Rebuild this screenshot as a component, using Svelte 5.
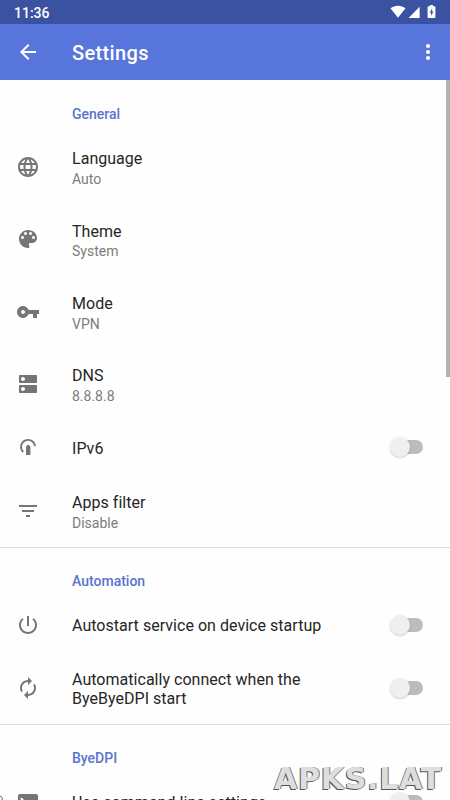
<script>
  const sections = [
    {
      title: 'General',
      rows: [
        { icon: 'globe', title: 'Language', summary: 'Auto' },
        { icon: 'palette', title: 'Theme', summary: 'System' },
        { icon: 'key', title: 'Mode', summary: 'VPN' },
        { icon: 'dns', title: 'DNS', summary: '8.8.8.8' },
        { icon: 'ipv6', title: 'IPv6', toggle: true },
        { icon: 'filter', title: 'Apps filter', summary: 'Disable' }
      ]
    },
    {
      title: 'Automation',
      rows: [
        { icon: 'power', title: 'Autostart service on device startup', toggle: true },
        { icon: 'sync', title: 'Automatically connect when the ByeByeDPI start', toggle: true, tall: true }
      ]
    },
    {
      title: 'ByeDPI',
      rows: [{ icon: 'terminal', title: 'Use command line settings', toggle: true }]
    }
  ];

  const icons = {
    globe: 'M11.99 2C6.47 2 2 6.48 2 12s4.47 10 9.99 10C17.52 22 22 17.52 22 12S17.52 2 11.99 2zm6.93 6h-2.95c-.32-1.25-.78-2.45-1.38-3.56 1.84.63 3.37 1.91 4.33 3.56zM12 4.04c.83 1.2 1.48 2.53 1.91 3.96h-3.82c.43-1.43 1.08-2.76 1.91-3.96zM4.26 14C4.1 13.36 4 12.69 4 12s.1-1.36.26-2h3.38c-.08.66-.14 1.32-.14 2s.06 1.34.14 2H4.26zm.82 2h2.95c.32 1.25.78 2.45 1.38 3.56-1.84-.63-3.37-1.9-4.33-3.56zm2.95-8H5.08c.96-1.66 2.49-2.93 4.33-3.56C8.81 5.55 8.35 6.75 8.03 8zM12 19.96c-.83-1.2-1.48-2.53-1.91-3.96h3.82c-.43 1.43-1.08 2.76-1.91 3.96zM14.34 14H9.66c-.09-.66-.16-1.32-.16-2s.07-1.35.16-2h4.68c.09.65.16 1.32.16 2s-.07 1.34-.16 2zm.25 5.56c.6-1.11 1.06-2.31 1.38-3.56h2.95c-.96 1.65-2.49 2.93-4.33 3.56zM16.36 14c.08-.66.14-1.32.14-2s-.06-1.34-.14-2h3.38c.16.64.26 1.31.26 2s-.1 1.36-.26 2h-3.38z',
    palette: 'M12 3c-4.97 0-9 4.03-9 9s4.03 9 9 9c.83 0 1.5-.67 1.5-1.5 0-.39-.15-.74-.39-1.01-.23-.26-.38-.61-.38-.99 0-.83.67-1.5 1.5-1.5H16c2.76 0 5-2.24 5-5 0-4.42-4.03-8-9-8zm-5.5 9c-.83 0-1.5-.67-1.5-1.5S5.67 9 6.5 9 8 9.67 8 10.5 7.33 12 6.5 12zm3-4C8.67 8 8 7.33 8 6.5S8.67 5 9.5 5s1.5.67 1.5 1.5S10.33 8 9.5 8zm5 0c-.83 0-1.5-.67-1.5-1.5S13.67 5 14.5 5s1.5.67 1.5 1.5S15.33 8 14.5 8zm3 4c-.83 0-1.5-.67-1.5-1.5S16.67 9 17.5 9s1.5.67 1.5 1.5-.67 1.5-1.5 1.5z',
    key: 'M12.65 10C11.83 7.67 9.61 6 7 6c-3.31 0-6 2.69-6 6s2.69 6 6 6c2.61 0 4.83-1.67 5.65-4H17v4h4v-4h2v-4H12.65zM7 14c-1.1 0-2-.9-2-2s.9-2 2-2 2 .9 2 2-.9 2-2 2z',
    dns: 'M20 13H4c-.55 0-1 .45-1 1v6c0 .55.45 1 1 1h16c.55 0 1-.45 1-1v-6c0-.55-.45-1-1-1zM7 19c-1.1 0-2-.9-2-2s.9-2 2-2 2 .9 2 2-.9 2-2 2zM20 3H4c-.55 0-1 .45-1 1v6c0 .55.45 1 1 1h16c.55 0 1-.45 1-1V4c0-.55-.45-1-1-1zM7 9c-1.1 0-2-.9-2-2s.9-2 2-2 2 .9 2 2-.9 2-2 2z',
    filter: 'M10 18h4v-2h-4v2zM3 6v2h18V6H3zm3 7h12v-2H6v2z',
    power: 'M13 3h-2v10h2V3zm4.83 2.17l-1.42 1.42C17.99 7.86 19 9.81 19 12c0 3.87-3.13 7-7 7s-7-3.13-7-7c0-2.19 1.01-4.14 2.58-5.42L6.17 5.17C4.23 6.82 3 9.26 3 12c0 4.97 4.03 9 9 9s9-4.03 9-9c0-2.74-1.23-5.18-3.17-6.83z',
    sync: 'M12 6v3l4-4-4-4v3c-4.42 0-8 3.58-8 8 0 1.57.46 3.03 1.24 4.26L6.7 14.8c-.45-.83-.7-1.79-.7-2.8 0-3.31 2.69-6 6-6zm6.76 1.74L17.3 9.2c.44.84.7 1.79.7 2.8 0 3.31-2.69 6-6 6v-3l-4 4 4 4v-3c4.42 0 8-3.58 8-8 0-1.57-.46-3.03-1.24-4.26z',
    terminal: 'M20 4H4c-1.11 0-2 .9-2 2v12c0 1.1.89 2 2 2h16c1.1 0 2-.9 2-2V6c0-1.1-.89-2-2-2zM5.5 16.6l-1.4-1.4L7.3 12 4.1 8.8l1.4-1.4 4.6 4.6-4.6 4.6zM19 17h-7v-2h7v2z'
  };
</script>

<div class="screen">
  <div class="status">
    <span>11:36</span>
    <svg width="50" height="24" viewBox="0 0 50 24" fill="#fff">
      <path d="M.5 8.3C4.8 4.9 11.2 4.9 15.5 8.3L8 17.8z" />
      <path d="M29.6 6.7v11.2H18.6z" />
      <path d="M37.6 6.2h1.5V5h3.2v1.2h1.5c.5 0 .8.3.8.8v10.2c0 .5-.3.8-.8.8h-6.2c-.5 0-.8-.3-.8-.8V7c0-.5.3-.8.8-.8z" transform="translate(.8)" />
      <path d="M42.2 8.3l-2.5 4.4h1.4v3.2l2.3-4.4h-1.3z" fill="#3b52a3" />
    </svg>
  </div>

  <header>
    <svg class="back" width="24" height="24" viewBox="0 0 24 24" fill="#fff"><path d="M20 11H7.83l5.59-5.59L12 4l-8 8 8 8 1.41-1.41L7.83 13H20v-2z" /></svg>
    <h1>Settings</h1>
    <svg width="24" height="24" viewBox="0 0 24 24" fill="#fff"><circle cx="12" cy="6" r="2.1" /><circle cx="12" cy="12" r="2.1" /><circle cx="12" cy="18" r="2.1" /></svg>
  </header>

  <main>
    {#each sections as section}
      <section>
        <h2>{section.title}</h2>
        {#each section.rows as row}
          <div class="row" class:short={row.toggle && !row.tall} class:tall={row.tall}>
            <svg class="icon" width="24" height="24" viewBox="0 0 24 24">
              {#if row.icon === 'ipv6'}
                <path d="M7.2 17A7 7 0 1 1 19 11.2" fill="none" stroke="#757575" stroke-width="1.8" />
                <path d="M10 20v-8.5l2.2-2 2.2 2V20z" />
              {:else}
                <path d={icons[row.icon]} />
              {/if}
            </svg>
            <div class="text">
              <div class="title">{row.title}</div>
              {#if row.summary}<div class="summary">{row.summary}</div>{/if}
            </div>
            {#if row.toggle}<div class="switch"><i></i></div>{/if}
          </div>
        {/each}
      </section>
    {/each}
  </main>

  <div class="scrollbar"></div>
  <svg class="corner" width="5" height="8" viewBox="0 0 5 8"><path d="M0 3.5L2.5 6.5 2 8" fill="none" stroke="#555" /></svg>
  <div class="watermark">APKS.LAT</div>
</div>

<style>
  :global(body) { margin: 0; }
  .screen {
    position: relative;
    width: 450px;
    height: 800px;
    overflow: hidden;
    background: #fefefe;
    font-family: Roboto, sans-serif;
  }
  .status {
    height: 24px;
    display: flex;
    align-items: center;
    justify-content: space-between;
    box-sizing: border-box;
    padding: 0 10px 0 14px;
    background: #3b52a3;
    color: #fff;
    font-size: 14px;
    font-weight: 500;
  }
  .status span { padding-top: 2px; }
  header {
    height: 56px;
    display: flex;
    align-items: center;
    box-sizing: border-box;
    padding: 0 10px 0 16px;
    background: #5875dc;
    color: #fff;
  }
  h1 {
    flex: 1;
    margin: 2px 0 0 32px;
    font-size: 20px;
    font-weight: 500;
    letter-spacing: 0.35px;
  }
  section + section { border-top: 1px solid #dcdcdc; }
  h2 {
    height: 50.75px;
    box-sizing: border-box;
    margin: 0;
    padding: 24px 0 0 72px;
    font-size: 14px;
    line-height: 20px;
    font-weight: 500;
    color: #5875cf;
  }
  section + section h2 { height: 50px; padding-top: 23px; }
  .row {
    display: flex;
    align-items: center;
    height: 72.4px;
    box-sizing: border-box;
    padding: 0 27px 0 16px;
  }
  .row.short { height: 54.3px; }
  .row.tall { height: 71.6px; }
  .icon { flex: none; fill: #757575; }
  .text { width: 260px; margin-left: 32px; padding-top: 4.6px; }
  .short .text, .tall .text { padding-top: 2px; }
  .title { font-size: 16px; line-height: 19.5px; letter-spacing: 0.03px; color: #262626; }
  .summary { font-size: 14px; line-height: 20.5px; color: #7c7c7c; }
  .switch {
    width: 28px;
    height: 14px;
    margin-left: auto;
    border-radius: 7px;
    background: #bcbcbc;
  }
  .switch i {
    display: block;
    width: 20px;
    height: 20px;
    margin: -3px 0 0 -5px;
    border-radius: 50%;
    background: #efefef;
    box-shadow: 0 1px 2px #0003;
  }
  .scrollbar {
    position: absolute;
    right: 0;
    top: 80px;
    width: 4px;
    height: 297px;
    background: #b3b3b3;
  }
  .corner { position: absolute; left: 0; bottom: 0; }
  .watermark {
    position: absolute;
    left: 274px;
    top: 761px;
    font: bold 30px/36px "DejaVu Sans", sans-serif;
    letter-spacing: 0.75px;
    color: #dedede;
    text-shadow: -1px 1px 0 #555, 1px 0 0 #777;
    white-space: nowrap;
  }
</style>
